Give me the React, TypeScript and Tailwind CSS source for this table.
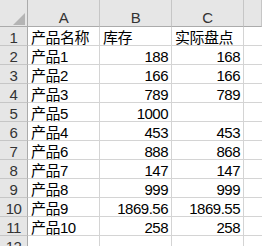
import React from 'react';

// Spreadsheet rows: name, stock, counted
const rows: [string, string, string][] = [
  ['产品名称', '库存', '实际盘点'],
  ['产品1', '188', '168'],
  ['产品2', '166', '166'],
  ['产品3', '789', '789'],
  ['产品5', '1000', ''],
  ['产品4', '453', '453'],
  ['产品6', '888', '868'],
  ['产品7', '147', '147'],
  ['产品8', '999', '999'],
  ['产品9', '1869.56', '1869.55'],
  ['产品10', '258', '258'],
  ['', '', ''],
];

const font = { fontFamily: '"Liberation Sans", "Noto Sans CJK SC", sans-serif' };

export default function App() {
  return (
    <div
      className="w-[262px] h-[246px] overflow-hidden bg-white text-[15px] text-black tracking-[-0.5px]"
      style={font}
    >
      <div className="grid grid-cols-[28px_72px_72px_72px_1fr]">
        {/* Column headers */}
        <div className="relative h-[27px] bg-[#e6e6e6] border-r border-b border-[#ababab]">
          <svg className="absolute left-[13px] top-[13px]" width="12" height="12" viewBox="0 0 12 12">
            <polygon points="12,0 12,12 0,12" fill="#b4b4b4" />
          </svg>
        </div>
        {['A', 'B', 'C', ''].map((col, i) => (
          <div
            key={i}
            className="h-[27px] bg-[#e6e6e6] border-r border-b border-r-[#c6c6c6] border-b-[#ababab] flex items-end justify-center pb-[2px] leading-[13px] text-[#333]"
          >
            {col}
          </div>
        ))}

        {/* Body rows */}
        {rows.map((row, r) => (
          <React.Fragment key={r}>
            <div className="h-[19px] bg-[#e6e6e6] border-r border-b border-r-[#ababab] border-b-[#c6c6c6] flex items-end justify-center pb-[1px] leading-[13px] text-[#333]">
              {r + 1}
            </div>
            {row.map((cell, c) => (
              <div
                key={c}
                className={`h-[19px] border-r border-b border-[#d4d4d4] flex items-end pb-[1px] leading-[13px] whitespace-nowrap ${
                  c > 0 && r > 0 ? 'justify-end pr-[3px]' : 'justify-start pl-[3px]'
                }`}
              >
                {cell}
              </div>
            ))}
            <div className="h-[19px] border-b border-[#d4d4d4]" />
          </React.Fragment>
        ))}
      </div>
    </div>
  );
}
